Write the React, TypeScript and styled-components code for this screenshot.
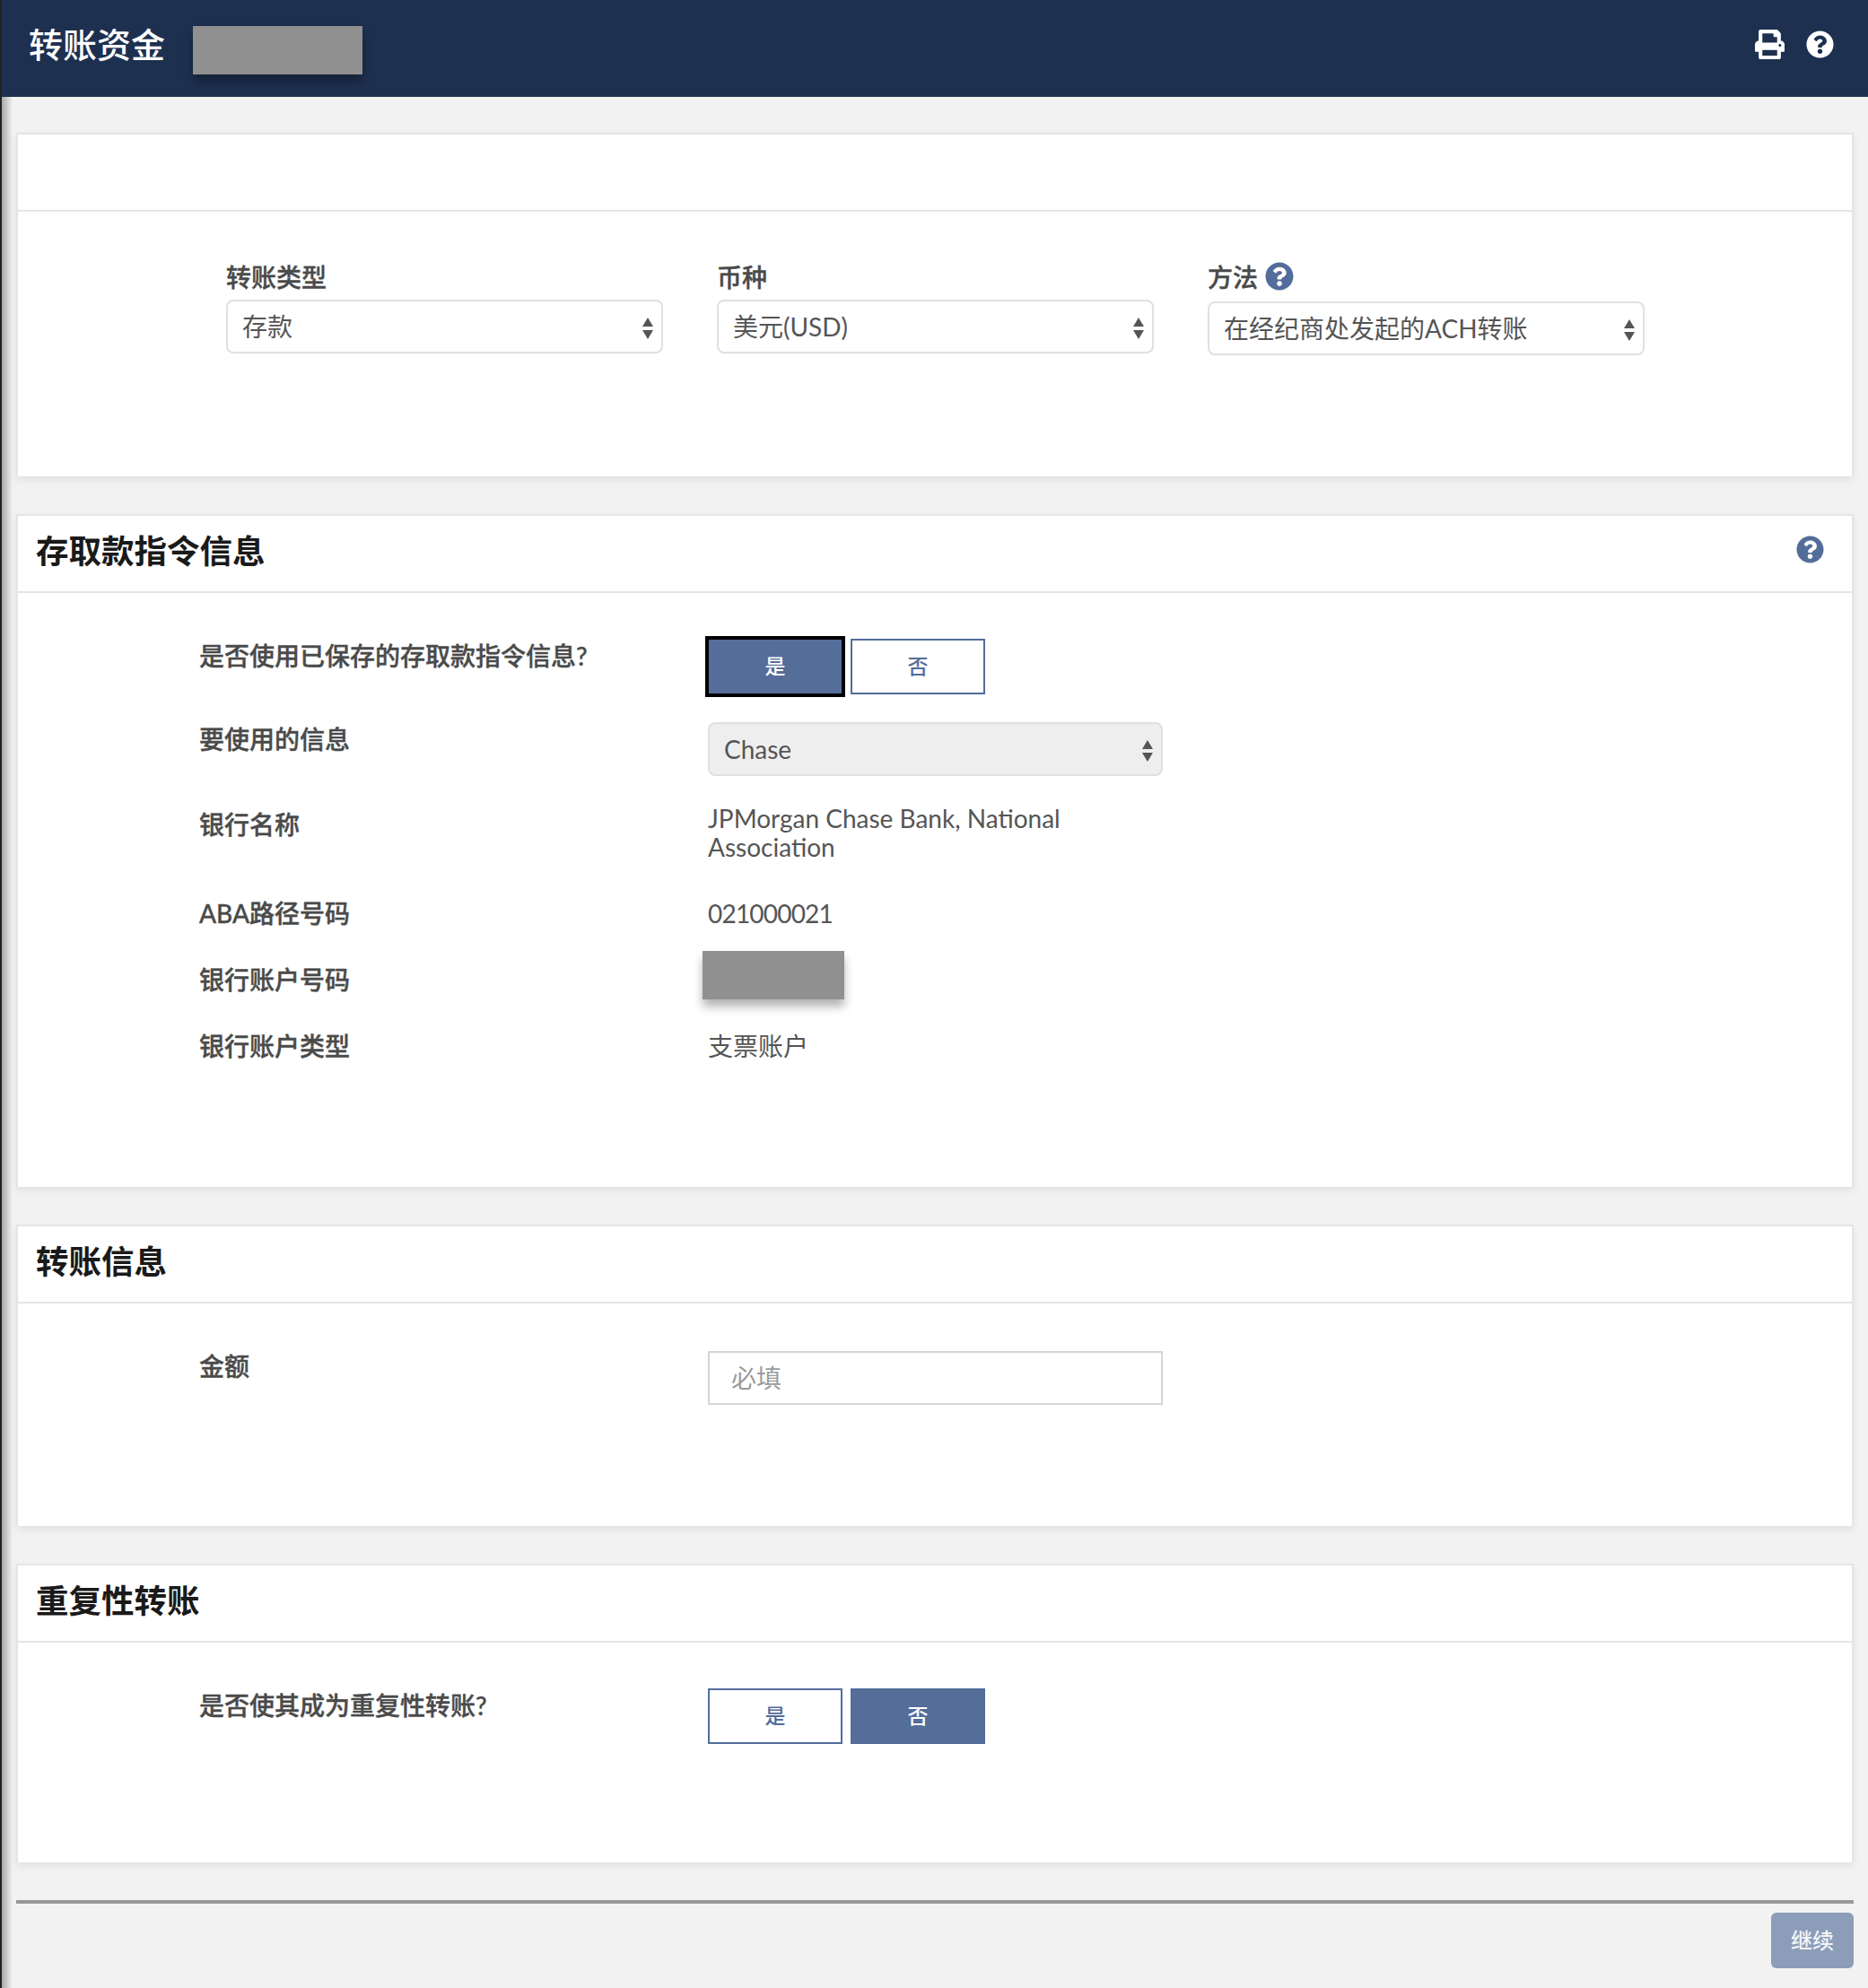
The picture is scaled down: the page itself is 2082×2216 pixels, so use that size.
import React from "react";
import styled, { createGlobalStyle } from "styled-components";
import { FaPrint, FaQuestionCircle } from "react-icons/fa";

const FONT = `Lato, "Noto Sans CJK SC", sans-serif`;

const GlobalStyle = createGlobalStyle`
  * {
    box-sizing: border-box;
  }

  body {
    margin: 0;
    font-family: ${FONT};
    background: linear-gradient(to right, #222 0 2px, #a8a8a8 2px, #f2f2f2 14px);
  }
`;

const Page = styled.div`
  padding-left: 2px;
  height: 2216px;
  overflow: hidden;
`;

const Header = styled.header`
  display: flex;
  align-items: flex-start;
  height: 108px;
  padding: 29px 38px 0 30px;
  background-color: #1e3050;
  color: #fff;
`;

const Title = styled.h1`
  height: 44px;
  margin: -2px 31px 0 0;
  font-size: 38px;
  line-height: 44px;
  font-weight: 500;
`;

const Redacted = styled.div<{ $w: number; $pull?: number }>`
  width: ${(p) => p.$w}px;
  height: 54px;
  margin-left: ${(p) => p.$pull ?? 0}px;
  background-color: #909090;
  box-shadow: 0 8px 10px rgba(0, 0, 0, 0.3);
`;

const HeaderIcons = styled.div`
  display: flex;
  align-items: center;
  gap: 24px;
  margin-left: auto;
  margin-top: 4px;
  line-height: 0;
`;

const Content = styled.main`
  padding: 40px 16px 0;
`;

const Card = styled.section<{ $height: number }>`
  height: ${(p) => p.$height}px;
  margin-bottom: 42px;
  background-color: #fff;
  border: 2px solid #e5e5e5;
  border-bottom: 0;
  box-shadow: 0 4px 8px rgba(0, 0, 0, 0.07);
`;

const CardHeader = styled.div`
  display: flex;
  align-items: center;
  justify-content: space-between;
  height: 86px;
  padding: 0 31px 10px 20px;
  border-bottom: 2px solid #e5e5e5;
`;

const CardTitle = styled.h2`
  margin: 0;
  font-size: 36.5px;
  font-weight: 700;
  color: #1a1a1a;
`;

const SelectRow = styled.div`
  display: grid;
  grid-template-columns: repeat(3, 487px);
  column-gap: 60px;
  padding: 54px 0 0 232px;
`;

const FieldLabel = styled.label`
  display: flex;
  align-items: center;
  gap: 8px;
  height: 44px;
  padding-bottom: 9px;
  font-size: 28px;
  font-weight: 500;
  -webkit-text-stroke: 0.4px #4a4a4a;
  color: #4a4a4a;
`;

const Help = styled.span<{ $size: number }>`
  display: inline-flex;
  color: #536c9a;
  font-size: ${(p) => p.$size}px;
`;

const SelectBox = styled.div<{ $drop?: number }>`
  position: relative;
  height: 60px;
  margin-top: ${(p) => p.$drop ?? 0}px;
`;

const NativeSelect = styled.select<{ $muted?: boolean }>`
  width: 100%;
  height: 100%;
  padding: 0 16px;
  appearance: none;
  border: 2px solid #e0e0e0;
  border-radius: 8px;
  background-color: ${(p) => (p.$muted ? "#eeeeee" : "#fff")};
  font-family: ${FONT};
  font-size: 28px;
  color: #555;
  opacity: 1;
`;

const Arrows = styled.svg`
  position: absolute;
  top: 19px;
  right: 10px;
  width: 14px;
  height: 26px;
  pointer-events: none;
`;

const Rows = styled.div`
  padding: 0 0 0 202px;
`;

const Row = styled.div<{ $top: number }>`
  display: flex;
  align-items: flex-start;
  margin-top: ${(p) => p.$top}px;
`;

const RowLabel = styled.div`
  flex: 0 0 567px;
  font-size: 28px;
  line-height: 40px;
  font-weight: 500;
  -webkit-text-stroke: 0.4px #4a4a4a;
  color: #4a4a4a;
`;

const RowValue = styled.div<{ $offset?: number }>`
  width: 507px;
  margin-top: ${(p) => p.$offset ?? 0}px;
  font-size: 28px;
  line-height: 32px;
  color: #555;
`;

const Digits = styled.span`
  letter-spacing: -0.8px;
`;

const Toggle = styled.div<{ $drop?: number }>`
  display: flex;
  gap: 9px;
  margin-top: ${(p) => p.$drop ?? 0}px;
`;

const ToggleButton = styled.button<{ $active?: boolean; $focus?: boolean }>`
  width: 150px;
  height: 62px;
  padding: 0 0 4px;
  border: 2px solid #536c9a;
  border-radius: 0;
  background-color: ${(p) => (p.$active ? "#546d99" : "#fff")};
  color: ${(p) => (p.$active ? "#fff" : "#536c9a")};
  font-family: ${FONT};
  font-size: 23px;
  font-weight: 500;
  outline: ${(p) => (p.$focus ? "4px solid #000" : "none")};
  outline-offset: -1px;
`;

const TextInput = styled.input`
  width: 100%;
  height: 60px;
  padding: 0 24px;
  border: 2px solid #d5d5d5;
  font-family: ${FONT};
  font-size: 28px;

  &::placeholder {
    color: #9a9a9a;
    opacity: 1;
  }
`;

const Rule = styled.hr`
  height: 4px;
  margin: 0;
  border: 0;
  background-color: #999;
`;

const Footer = styled.div`
  display: flex;
  justify-content: flex-end;
  padding-top: 10px;
`;

const ContinueButton = styled.button`
  width: 92px;
  height: 62px;
  padding: 0 0 4px;
  border: 0;
  border-radius: 6px;
  background-color: #8c9db9;
  color: #f2f4f7;
  font-family: ${FONT};
  font-size: 24px;
  font-weight: 500;
`;

const Select = ({
  value,
  muted,
  drop,
}: {
  value: string;
  muted?: boolean;
  drop?: number;
}) => (
  <SelectBox $drop={drop}>
    <NativeSelect $muted={muted} defaultValue={value}>
      <option>{value}</option>
    </NativeSelect>
    <Arrows viewBox="0 0 14 26">
      <path d="M7 1 L13 11 L1 11 Z M1 15 L13 15 L7 25 Z" fill="#555" />
    </Arrows>
  </SelectBox>
);

export default function App() {
  return (
    <Page>
      <GlobalStyle />
      <Header>
        <Title>转账资金</Title>
        <Redacted $w={189} />
        <HeaderIcons>
          <FaPrint size={33} />
          <FaQuestionCircle size={31} />
        </HeaderIcons>
      </Header>
      <Content>
        <Card $height={383}>
          <CardHeader />
          <SelectRow>
            <div>
              <FieldLabel>转账类型</FieldLabel>
              <Select value="存款" />
            </div>
            <div>
              <FieldLabel>币种</FieldLabel>
              <Select value="美元(USD)" />
            </div>
            <div>
              <FieldLabel>
                方法
                <Help $size={32}>
                  <FaQuestionCircle />
                </Help>
              </FieldLabel>
              <Select value="在经纪商处发起的ACH转账" drop={2} />
            </div>
          </SelectRow>
        </Card>

        <Card $height={750}>
          <CardHeader>
            <CardTitle>存取款指令信息</CardTitle>
            <Help $size={31}>
              <FaQuestionCircle />
            </Help>
          </CardHeader>
          <Rows>
            <Row $top={50}>
              <RowLabel>是否使用已保存的存取款指令信息?</RowLabel>
              <Toggle $drop={1}>
                <ToggleButton $active $focus>
                  是
                </ToggleButton>
                <ToggleButton>否</ToggleButton>
              </Toggle>
            </Row>
            <Row $top={30}>
              <RowLabel>要使用的信息</RowLabel>
              <RowValue $offset={1}>
                <Select value="Chase" muted />
              </RowValue>
            </Row>
            <Row $top={34}>
              <RowLabel>银行名称</RowLabel>
              <RowValue $offset={-3}>
                JPMorgan Chase Bank, National
                <br />
                Association
              </RowValue>
            </Row>
            <Row $top={38}>
              <RowLabel>ABA路径号码</RowLabel>
              <RowValue $offset={4}>
                <Digits>021000021</Digits>
              </RowValue>
            </Row>
            <Row $top={34}>
              <RowLabel>银行账户号码</RowLabel>
              <RowValue $offset={-12}>
                <Redacted $w={158} $pull={-6} />
              </RowValue>
            </Row>
            <Row $top={32}>
              <RowLabel>银行账户类型</RowLabel>
              <RowValue $offset={4}>支票账户</RowValue>
            </Row>
          </Rows>
        </Card>

        <Card $height={336}>
          <CardHeader>
            <CardTitle>转账信息</CardTitle>
          </CardHeader>
          <Rows>
            <Row $top={50}>
              <RowLabel>金额</RowLabel>
              <RowValue $offset={3}>
                <TextInput placeholder="必填" />
              </RowValue>
            </Row>
          </Rows>
        </Card>

        <Card $height={333}>
          <CardHeader>
            <CardTitle>重复性转账</CardTitle>
          </CardHeader>
          <Rows>
            <Row $top={50}>
              <RowLabel>是否使其成为重复性转账?</RowLabel>
              <Toggle $drop={1}>
                <ToggleButton>是</ToggleButton>
                <ToggleButton $active>否</ToggleButton>
              </Toggle>
            </Row>
          </Rows>
        </Card>

        <Rule />
        <Footer>
          <ContinueButton>继续</ContinueButton>
        </Footer>
      </Content>
    </Page>
  );
}
